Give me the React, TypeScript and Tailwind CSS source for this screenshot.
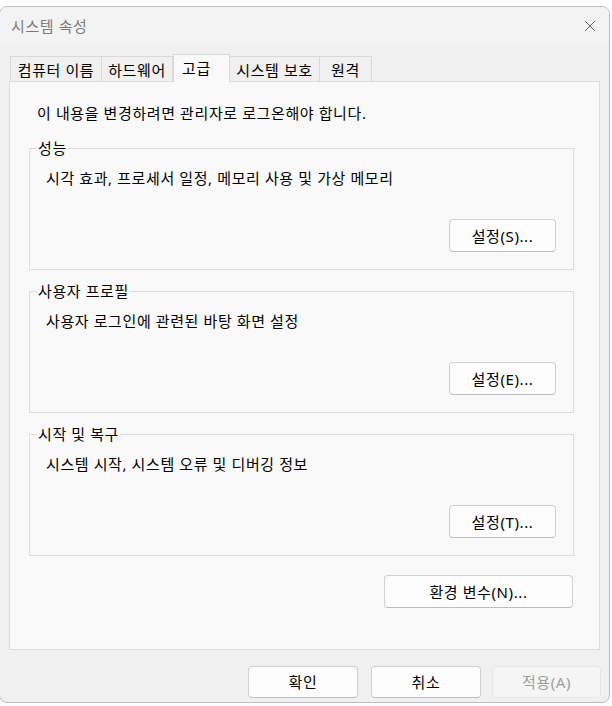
import React from "react";

const font = "font-['Noto_Sans','Noto_Sans_CJK_KR',sans-serif]";
const label = "text-[15px] leading-[20px] tracking-[0.6px]";

interface TabProps {
  label: string;
  width: string;
  active?: boolean;
}

function Tab({ label: text, width, active }: TabProps) {
  if (active) {
    return (
      <div
        className={`${width} ${label} relative z-10 -mb-px h-[28px] border border-b-0 border-[#d9d9d9] bg-[#f9f9f9] pl-[8px] pt-[3px] text-black`}
      >
        {text}
      </div>
    );
  }
  return (
    <div
      className={`${width} ${label} h-[25px] border border-b-0 border-l-0 first:border-l border-[#d9d9d9] bg-[#f0f0f0] pt-[3px] text-center text-black`}
    >
      {text}
    </div>
  );
}

function WinButton({
  text,
  className = "",
  disabled,
}: {
  text: string;
  className?: string;
  disabled?: boolean;
}) {
  return (
    <button
      className={`${className} ${label} flex items-center justify-center rounded-[4px] border ${
        disabled
          ? "border-[#e5e5e5] bg-[#f5f5f5] text-[#9d9d9d]"
          : "border-[#d0d0d0] border-b-[#bdbdbd] bg-[#fdfdfd] text-black"
      }`}
    >
      {text}
    </button>
  );
}

function Group({
  legend,
  text,
  button,
  className = "",
}: {
  legend: string;
  text: string;
  button: string;
  className?: string;
}) {
  return (
    <fieldset
      className={`${className} ml-[19px] h-[132px] w-[545px] border border-[#dcdcdc] px-[7px]`}
    >
      <legend className={`${label} px-[1px] text-black`}>{legend}</legend>
      <div className="pl-[9px] pr-[10px]">
        <p className={`${label} mt-[10px] text-black`}>{text}</p>
        <div className="mt-[31px] flex justify-end">
          <WinButton text={button} className="h-[33px] w-[107px]" />
        </div>
      </div>
    </fieldset>
  );
}

export default function App() {
  return (
    <div className={`${font} h-[706px] w-[612px] overflow-hidden bg-white`}>
      <div className="ml-[-1px] mt-[6px] flex h-[697px] w-[611px] flex-col overflow-hidden rounded-[8px] border border-[#bdbdbd] bg-[#f0f0f0]">
        {/* Title bar */}
        <div className="flex h-[37px] shrink-0 items-center justify-between bg-[#f3f3f3] pl-[11px] pr-[13px]">
          <span className={`${label} text-[#7a7a7a]`}>시스템 속성</span>
          <svg width="12" height="12" viewBox="0 0 12 12">
            <path
              d="M1 1 L11 11 M11 1 L1 11"
              stroke="#6a6a6a"
              strokeWidth="1"
              fill="none"
            />
          </svg>
        </div>

        {/* Body */}
        <div className="flex flex-1 flex-col px-[9px] pt-[10px]">
          <div className="flex h-[27px] items-end pl-px">
            <Tab label="컴퓨터 이름" width="w-[92px]" />
            <Tab label="하드웨어" width="w-[71px]" />
            <Tab label="고급" width="w-[57px]" active />
            <Tab label="시스템 보호" width="w-[90px]" />
            <Tab label="원격" width="w-[52px]" />
          </div>

          <div className="flex h-[569px] flex-col border border-[#dcdcdc] bg-[#f9f9f9] pt-[21px]">
            <p className={`${label} pl-[27px] text-black`}>
              이 내용을 변경하려면 관리자로 로그온해야 합니다.
            </p>
            <Group
              className="mt-[15px]"
              legend="성능"
              text="시각 효과, 프로세서 일정, 메모리 사용 및 가상 메모리"
              button="설정(S)..."
            />
            <Group
              className="mt-[11px]"
              legend="사용자 프로필"
              text="사용자 로그인에 관련된 바탕 화면 설정"
              button="설정(E)..."
            />
            <Group
              className="mt-[11px]"
              legend="시작 및 복구"
              text="시스템 시작, 시스템 오류 및 디버깅 정보"
              button="설정(T)..."
            />
            <div className="mr-[26px] mt-[19px] flex justify-end">
              <WinButton text="환경 변수(N)..." className="h-[33px] w-[189px]" />
            </div>
          </div>

          <div className="mr-[-1px] mt-[16px] flex justify-end">
            <WinButton text="확인" className="h-[32px] w-[110px]" />
            <WinButton text="취소" className="ml-[13px] h-[32px] w-[110px]" />
            <WinButton
              text="적용(A)"
              className="ml-[11px] h-[32px] w-[109px]"
              disabled
            />
          </div>
        </div>
      </div>
    </div>
  );
}
